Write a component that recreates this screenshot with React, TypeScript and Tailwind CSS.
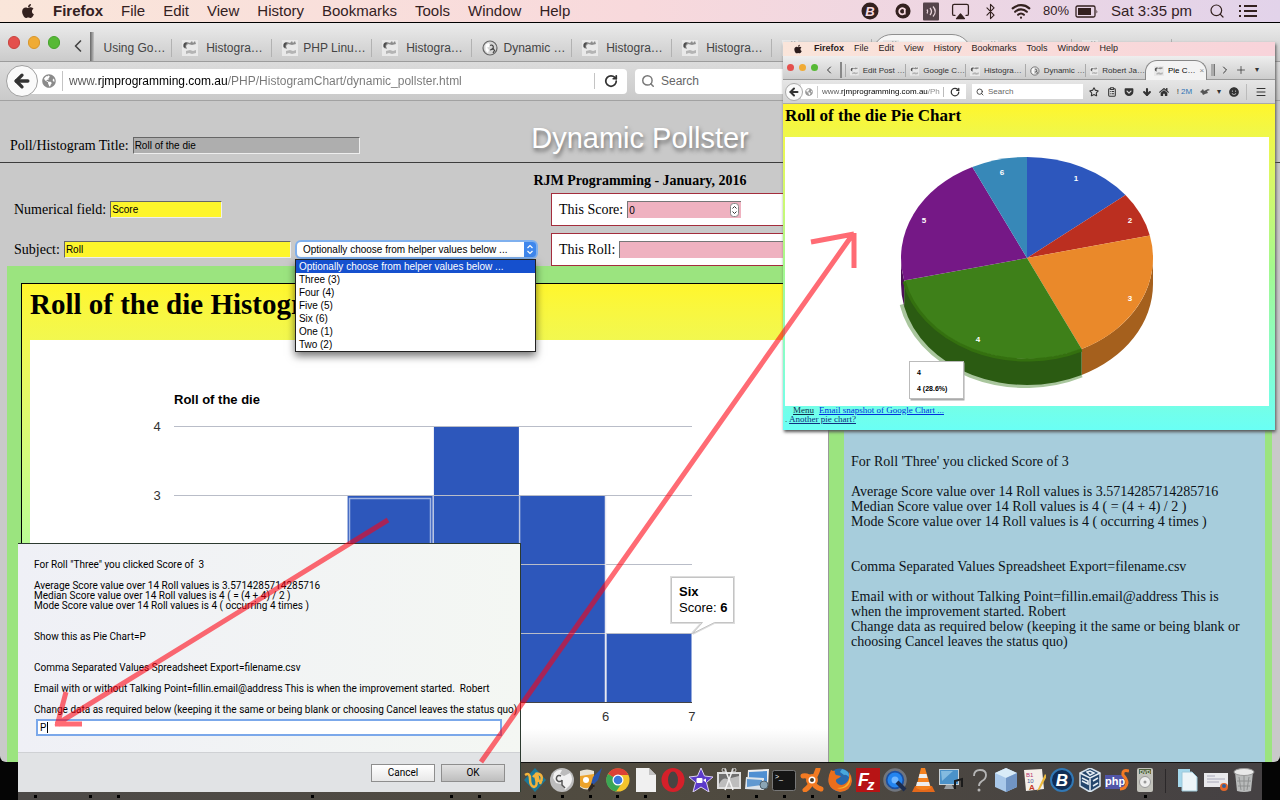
import type { ReactNode } from "react"
import {
  Airplay,
  ArrowDown,
  ArrowLeft,
  Bluetooth,
  ChevronLeft,
  ChevronRight,
  ClipboardList,
  Menu,
  Plus,
  RotateCw,
  Search,
  Star,
  Wifi,
} from "lucide-react"
import { FaApple, FaGetPocket, FaGlobeAmericas, FaHome, FaSmile } from "react-icons/fa"

const MENUS = ["File", "Edit", "View", "History", "Bookmarks", "Tools", "Window", "Help"]

const HELPERS = [
  "Optionally choose from helper values below ...",
  "Three (3)",
  "Four (4)",
  "Five (5)",
  "Six (6)",
  "One (1)",
  "Two (2)",
]

type TabInfo = { title: string; round?: boolean; active?: boolean }

const TABS: TabInfo[] = [
  { title: "Histogra…" },
  { title: "PHP Linu…" },
  { title: "Histogra…" },
  { title: "Dynamic …", round: true },
  { title: "Histogra…" },
  { title: "Histogra…" },
  { title: "" },
  { title: "", active: true },
  { title: "" },
  { title: "" },
]

const PIE_TABS: TabInfo[] = [
  { title: "Edit Post …" },
  { title: "Google C…" },
  { title: "Histogra…" },
  { title: "Dynamic …", round: true },
  { title: "Robert Ja…" },
]

const ROLL_COUNTS = [2, 1, 3, 4, 3, 1]
const PIE_COLORS = ["#2d57bd", "#bb2f20", "#ea892a", "#3e8019", "#751886", "#3788b8"]

function Favicon({ round, className }: { round?: boolean; className: string }) {
  if (round) {
    return (
      <svg viewBox="0 0 16 16" className={className}>
        <circle cx="8" cy="8" r="7" fill="#d6d6d6" stroke="#666" strokeWidth="1.2" />
        <path d="M3.5 4.500l3-1.500 1.500 2-1 2-2 .5 2 2.500-1 3-2.500-2.500z" fill="#fff" />
        <path d="M8 5.500a2 2 0 1 1 1.500 3.500M8 10l3.500-1 1 1.500-1.500 2.500" fill="none" stroke="#444" strokeWidth="1.2" />
      </svg>
    )
  }
  return (
    <svg viewBox="0 0 16 16" className={className}>
      <rect width="16" height="16" fill="#e9e9e9" />
      <path d="M1 5q1-3 4-3l3 1 2-2 1 2 2-2 1 3-4 1-4-1-2 2 1 3-3-1z" fill="#8d8d8d" />
      <path d="M2 3.500q2-1.500 3-.500L3.500 5v3L1.500 7z" fill="#4c4c4c" />
      <path d="M4 11l4-1 3 1 3-1v3l-4 1-3-1-3 1z" fill="#b4b4b4" />
    </svg>
  )
}

function BackButton({ small }: { small?: boolean }) {
  return (
    <button
      aria-label="Back"
      className={
        small
          ? "relative grid size-[18px] shrink-0 place-items-center rounded-full border border-[#a9a9a9] bg-[#fafafa]"
          : "relative grid size-8 shrink-0 place-items-center rounded-full border border-[#a0a0a0] bg-[#fafafa]"
      }
    >
      <ArrowLeft className={small ? "size-3 text-[#333]" : "size-5 text-[#333]"} strokeWidth={4} />
    </button>
  )
}

function MacMenuBar() {
  return (
    <header className="flex h-[23px] shrink-0 items-center border-b border-black bg-gradient-to-r from-[#fae6da] via-[#f8d9dc] to-[#e2d3ea] pl-5 pr-[23px] text-[15px] text-[#33211f]">
      <FaApple className="mr-[17px] size-4" />
      <nav className="flex gap-[18px] leading-5">
        <span className="font-bold">Firefox</span>
        {MENUS.map((m) => (
          <span key={m}>{m}</span>
        ))}
      </nav>
      <div className="ml-auto flex items-center">
        <svg viewBox="0 0 18 18" className="mr-4 size-[18px]">
          <circle cx="9" cy="9" r="8.500" fill="#33211f" />
          <text x="9" y="14" textAnchor="middle" fontSize="13" fontStyle="italic" fontWeight="bold" fill="#f6d9e0">B</text>
        </svg>
        <svg viewBox="0 0 18 18" className="mr-3 size-4">
          <circle cx="9" cy="9" r="8.500" fill="#33211f" />
          <path d="M11 13V6.500M11.500 8a3.500 3.500 0 1 0-.500 3.500" fill="none" stroke="#f6d9e0" strokeWidth="2" />
        </svg>
        <svg viewBox="0 0 16 18" className="mr-3 h-[19px] w-4">
          <rect width="16" height="18" rx="1" fill="#54444a" />
          <path d="M4 7q1.500 2 0 4M7 5.500q3 3.500 0 7M10 4q4.500 5 0 10" fill="none" stroke="#e7d3d9" strokeWidth="1.300" />
        </svg>
        <Airplay className="mr-3 size-[19px] [&>path:last-child]:fill-[#33211f]" strokeWidth={1.6} />
        <Bluetooth className="mr-3 size-[17px]" strokeWidth={1.6} />
        <Wifi className="mr-3 size-5" strokeWidth={2.6} />
        <span className="text-[13px]">80%</span>
        <svg viewBox="0 0 24 13" className="ml-1.5 h-[13px] w-6">
          <rect x="1" y="1" width="19" height="11" rx="1.500" fill="none" stroke="#33211f" strokeWidth="1.300" />
          <rect x="3" y="3" width="13" height="7" fill="#33211f" />
          <path d="M21.500 4.500q1.500 2 0 4z" fill="#33211f" />
        </svg>
        <span className="ml-3 mr-[17px]">Sat 3:35 pm</span>
        <Search className="mr-[14px] size-4" strokeWidth={1.8} />
        <svg viewBox="0 0 18 14" className="h-[14px] w-[18px]">
          <path d="M0 2h2M0 7h2M0 12h2M5 2h13M5 7h13M5 12h13" stroke="#33211f" strokeWidth="2" />
        </svg>
      </div>
    </header>
  )
}

function TabStrip() {
  return (
    <div className="flex h-[39px] shrink-0 overflow-hidden border-b border-[#9c9c9c] bg-gradient-to-b from-[#ebebeb] to-[#cbcbcb]">
      <div className="flex w-[90px] shrink-0 items-center gap-2 pl-2">
        <i className="h-[13px] w-3 rounded-full border border-[#c8453f] bg-[#e4504d]" />
        <i className="h-[13px] w-3 rounded-full border border-[#d9962b] bg-[#f0ab35]" />
        <i className="h-[13px] w-3 rounded-full border border-[#45a32c] bg-[#57b935]" />
        <ChevronLeft className="mt-2 size-5 text-[#444]" strokeWidth={2} />
      </div>
      <div className="mb-1 mt-4 flex w-[82px] shrink-0 items-center border-r border-[#b2b2b2] text-[12px] text-[#444]">
        <i className="-my-3 mr-1 h-8 w-1 bg-gradient-to-r from-[#666] to-[#c4c4c4]" />
        <span className="flex-1 text-center">Using Go…</span>
      </div>
      {TABS.map((t, i) =>
        t.active ? (
          <div key={i} className="mt-[11px] flex w-[100px] shrink-0 items-center rounded-t-[20px] border border-[#8f8f8f] bg-[#f6f6f6] pl-2.5">
            <Favicon className="size-4" />
          </div>
        ) : (
          <div key={i} className="mb-1 mt-4 flex w-[100px] shrink-0 items-center border-r border-[#b2b2b2] pl-2.5 text-[12px] text-[#444]">
            <Favicon round={t.round} className="size-4" />
            <span className="flex-1 text-center">{t.title}</span>
          </div>
        ),
      )}
    </div>
  )
}

function AddressBar() {
  return (
    <div className="flex h-[39px] shrink-0 items-center border-b border-[#a2a2a2] bg-gradient-to-b from-[#dcdcdc] to-[#cacaca] pl-1.5">
      <BackButton />
      <div className="-ml-2 flex h-[25px] w-[597px] shrink-0 items-center rounded-r bg-white pl-3">
        <FaGlobeAmericas className="size-3.5 text-[#8b8b8b]" />
        <i className="ml-1.5 mr-[6px] h-5 w-px bg-[#c4c4c4]" />
        <input
          aria-label="Address"
          defaultValue="www.rjmprogramming.com.au/PHP/HistogramChart/dynamic_pollster.html"
          className="min-w-0 flex-1 bg-[linear-gradient(90deg,#555_29px,#000_29px,#000_159px,#777_159px)] bg-clip-text text-[12px] text-transparent outline-none"
        />
        <i className="h-4 w-px bg-[#c4c4c4]" />
        <button aria-label="Reload" className="grid w-8 place-items-center">
          <RotateCw className="size-3.5 text-[#333]" strokeWidth={3} />
        </button>
      </div>
      <label className="ml-2 mr-2 flex h-[25px] flex-1 items-center gap-1.5 rounded bg-white pl-1.5">
        <Search className="size-3.5 text-[#777]" strokeWidth={2.5} />
        <input aria-label="Search" placeholder="Search" className="min-w-0 flex-1 text-[12px] outline-none placeholder:text-[#666]" />
      </label>
    </div>
  )
}

function PollForm() {
  return (
    <div className="font-['Liberation_Serif',serif] text-[14px] text-black">
      <div className="grid h-[62px] grid-cols-[1fr_auto_1fr] border-b border-[#3c3c3c]">
        <div className="flex items-center gap-1 self-end pb-1.5 pl-2.5">
          <label htmlFor="title">Poll/Histogram Title:</label>
          <input
            id="title"
            defaultValue="Roll of the die"
            className="h-[17px] w-[227px] border border-b-[#eee] border-l-[#666] border-r-[#eee] border-t-[#666] bg-[#aeaeae] pl-px font-['Liberation_Sans',sans-serif] text-[10px]"
          />
        </div>
        <h1 className="self-end pb-[6px] font-['Liberation_Sans',sans-serif] text-[29px] leading-9 text-white [text-shadow:1px_3px_4px_#666]">
          Dynamic Pollster
        </h1>
      </div>
      <p className="flex h-[30px] items-center justify-center pt-1 font-bold">RJM Programming - January, 2016</p>
      <div className="grid grid-cols-[551fr_721fr] gap-y-[7px] pr-2">
        <div className="flex h-[33px] items-center gap-1 pl-3.5">
          <label htmlFor="num">Numerical field:</label>
          <input
            id="num"
            defaultValue="Score"
            className="h-[17px] w-28 border border-b-[#eee] border-l-[#666] border-r-[#eee] border-t-[#666] bg-[#fdf52b] pl-px font-['Liberation_Sans',sans-serif] text-[10px]"
          />
        </div>
        <div className="flex h-[33px] items-center gap-1 border border-[#a42d3c] bg-white pl-[7px]">
          <label htmlFor="score">This Score:</label>
          <div className="relative flex">
            <input
              id="score"
              defaultValue="0"
              className="h-[17px] w-[114px] border-l border-t border-[#777] bg-[#efb2c0] pl-px font-['Liberation_Sans',sans-serif] text-[10px]"
            />
            <svg viewBox="0 0 9 14" className="absolute right-0.5 top-0.5 h-[14px] w-[9px]">
              <rect x=".5" y=".5" width="8" height="13" rx="3" fill="#fff" stroke="#888" />
              <path d="M2.500 5.500l2-2 2 2M2.500 8.500l2 2 2-2" fill="none" stroke="#333" />
            </svg>
          </div>
        </div>
        <div className="flex h-[33px] items-center gap-1 pl-3.5">
          <label htmlFor="subject">Subject:</label>
          <input
            id="subject"
            defaultValue="Roll"
            className="h-[17px] w-[227px] border border-b-[#eee] border-l-[#666] border-r-[#eee] border-t-[#666] bg-[#fdf52b] pl-px font-['Liberation_Sans',sans-serif] text-[10px]"
          />
          <HelperSelect />
        </div>
        <div className="flex h-[33px] items-center gap-1 border border-[#a42d3c] bg-white pl-[7px]">
          <label htmlFor="roll">This Roll:</label>
          <input id="roll" className="h-[17px] w-[227px] border-l border-t border-[#777] bg-[#efb2c0]" />
        </div>
      </div>
    </div>
  )
}

function HelperSelect() {
  return (
    <div className="relative z-10 flex font-['Liberation_Sans',sans-serif] text-[10px]">
      <select
        aria-label="Helper values"
        className="ml-0.5 h-[15px] w-[239px] appearance-none rounded-[4px] bg-white pl-1.5 leading-[15px] shadow-[0_0_0_2px_#7fb0ee]"
      >
        {HELPERS.map((h) => (
          <option key={h}>{h}</option>
        ))}
      </select>
      <svg viewBox="0 0 12 15" className="pointer-events-none absolute right-0 top-0 h-[15px] w-3">
        <path d="M0 0h9a3 3 0 0 1 3 3v9a3 3 0 0 1-3 3H0z" fill="#3f87ec" />
        <path d="M3.500 6L6 3.500 8.500 6M3.500 9L6 11.500 8.500 9" fill="none" stroke="#fff" strokeWidth="1.200" />
      </svg>
      <ul className="absolute left-0 top-[17px] w-[241px] border border-[#222] bg-white leading-[13px] shadow-[0_4px_8px_rgba(0,0,0,0.55)]">
        {HELPERS.map((h, i) => (
          <li key={h} className={i === 0 ? "bg-[#1550ce] pl-[3px] text-white" : "pl-[3px]"}>
            {h}
          </li>
        ))}
      </ul>
    </div>
  )
}

function Histogram() {
  const base = 362
  const step = 69
  const barX = (i: number) => 144 + i * 86.3
  return (
    <svg viewBox="0 0 798 422" className="block h-[422px] w-[798px] font-['Liberation_Sans',sans-serif]">
      <defs>
        <linearGradient id="floor" x1="0" x2="0" y1="0" y2="1">
          <stop offset=".92" stopColor="#fff" />
          <stop offset="1" stopColor="#e4e4e4" />
        </linearGradient>
      </defs>
      <rect width="798" height="422" fill="url(#floor)" />
      <text x="144" y="64" fontSize="13" fontWeight="bold">Roll of the die</text>
      {ROLL_COUNTS.map((n, i) => (
        <rect key={i} x={barX(i) + 1} y={base - n * step} width={85} height={n * step} fill="#2d57bb" />
      ))}
      {[1, 2, 3, 4].map((n) => (
        <path key={n} d={`M144 ${base - n * step + 0.5}H662`} stroke="#b9bdc8" />
      ))}
      {[3, 4].map((n) => (
        <text key={n} x="127" y={base - n * step + 5} textAnchor="middle" fontSize="13" fill="#333">{n}</text>
      ))}
      <rect x="319.500" y="158.500" width="81" height="203" fill="none" stroke="#9fb4e4" strokeWidth="1.500" />
      <path d="M403.500 156v206M489.500 156v206" stroke="#b9c4e0" />
      <path d="M575.500 156v206" stroke="#e8e8f0" strokeWidth="1.500" />
      <path d={`M144 ${base}.500H662`} stroke="#444" />
      {[6, 7].map((n) => (
        <text key={n} x={barX(n - 1)} y="381" textAnchor="middle" fontSize="13" fill="#333">{n}</text>
      ))}
      <path d="M641.500 237.500h62v45h-19l-22 11 10-11h-31z" fill="none" stroke="#ddd" strokeWidth="3" />
      <path d="M641.500 237.500h62v45h-19l-22 11 10-11h-31z" fill="#fff" stroke="#c4c4c4" />
      <text x="649" y="256" fontSize="13" fontWeight="bold">Six</text>
      <text x="649" y="272" fontSize="13">
        Score: <tspan fontWeight="bold">6</tspan>
      </text>
    </svg>
  )
}

function Results() {
  return (
    <section className="bg-[#a7cddc] px-[7px] pt-[188px] font-['Liberation_Serif',serif] text-[14px] leading-[15px] text-[#0c1218]">
      <p>For Roll 'Three' you clicked Score of 3</p>
      <p className="mt-[15px]">
        Average Score value over 14 Roll values is 3.5714285714285716
        <br />
        Median Score value over 14 Roll values is 4 ( = (4 + 4) / 2 )
        <br />
        Mode Score value over 14 Roll values is 4 ( occurring 4 times )
      </p>
      <p className="mt-[30px]">Comma Separated Values Spreadsheet Export=filename.csv</p>
      <p className="mt-[15px]">
        Email with or without Talking Point=fillin.email@address This is
        <br />
        when the improvement started. Robert
        <br />
        Change data as required below (keeping it the same or being blank or
        <br />
        choosing Cancel leaves the status quo)
      </p>
    </section>
  )
}

function PromptDialog() {
  return (
    <form
      role="dialog"
      className="absolute left-[18px] top-[543px] z-20 flex h-[249px] w-[503px] flex-col border-r border-t border-[#2c3a30] bg-gradient-to-r from-[#eff0f6] to-[#f4f7f3] font-[Roboto,sans-serif] text-[10px] leading-[10px] text-black"
    >
      <div className="flex-1 px-4 pt-4">
        <p>For Roll "Three" you clicked Score of&nbsp; 3</p>
        <p className="mt-[11px]">
          Average Score value over 14 Roll values is 3.5714285714285716
          <br />
          Median Score value over 14 Roll values is 4 ( = (4 + 4) / 2 )
          <br />
          Mode Score value over 14 Roll values is 4 ( occurring 4 times )
        </p>
        <p className="mt-[21px]">Show this as Pie Chart=P</p>
        <p className="mt-[21px]">Comma Separated Values Spreadsheet Export=filename.csv</p>
        <p className="mt-[11px]">Email with or without Talking Point=fillin.email@address This is when the improvement started.&nbsp; Robert</p>
        <label htmlFor="answer" className="mt-[11px] block whitespace-nowrap">
          Change data as required below (keeping it the same or being blank or choosing Cancel leaves the status quo)
        </label>
        <div className="relative ml-0.5 mt-1 flex">
          <input id="answer" defaultValue="P" className="h-[17px] w-[466px] border-2 border-[#7ba8ea] bg-white pl-0.5 outline-none" />
          <i className="absolute left-[11px] top-[3px] h-[11px] w-px bg-black" />
        </div>
      </div>
      <div className="flex h-10 items-center justify-end gap-1.5 border-t border-[#cfd1d4] bg-[#e1e3e5] pr-[15px]">
        <button type="button" className="h-[18px] w-16 border border-[#8e8e8e] bg-gradient-to-b from-white to-[#e8e8e8]">Cancel</button>
        <button type="button" className="h-[18px] w-16 border border-[#8e8e8e] bg-gradient-to-b from-[#e2e2e2] to-[#bebebe]">OK</button>
      </div>
    </form>
  )
}

function PieChart() {
  const cx = 242
  const cy = 121
  const rx = 126
  const ry = 101
  const depth = 26
  const total = 14
  // slice shares for faces 1 to 6
  const shares = [2, 1, 3, 4, 3, 1]
  const at = (n: number) => {
    const a = (n / total) * Math.PI * 2
    return [cx + rx * Math.sin(a), cy - ry * Math.cos(a)]
  }
  let seen = 0
  const slices = shares.map((n, i) => {
    const [x1, y1] = at(seen)
    seen += n
    const [x2, y2] = at(seen)
    return <path key={i} d={`M${cx} ${cy}L${x1} ${y1}A${rx} ${ry} 0 0 1 ${x2} ${y2}Z`} fill={PIE_COLORS[i]} />
  })
  const [gx, gy] = at(6)
  const [px, py] = at(10)
  return (
    <svg viewBox="0 0 484 269" className="block h-[269px] w-[484px] bg-white font-['Liberation_Sans',sans-serif]">
      <path d={`M${px - 2} ${py + depth - 2}A${rx} ${ry} 0 0 0 ${gx} ${gy + depth}`} fill="none" stroke="#a9c69d" strokeWidth="5" />
      <path d={`M${cx + rx} ${cy}v${depth}A${rx} ${ry} 0 0 1 ${gx} ${gy + depth}v${-depth}A${rx} ${ry} 0 0 0 ${cx + rx} ${cy}`} fill="#a5601d" />
      <path d={`M${gx} ${gy}v${depth}A${rx} ${ry} 0 0 1 ${px} ${py + depth}v${-depth}A${rx} ${ry} 0 0 0 ${gx} ${gy}`} fill="#2b5b12" />
      <path d={`M${px} ${py}v${depth}A${rx} ${ry} 0 0 1 ${cx - rx} ${cy + depth}v${-depth}A${rx} ${ry} 0 0 0 ${px} ${py}`} fill="#4d1058" />
      {slices}
      <path d={`M${gx} ${gy + 1}A${rx} ${ry} 0 0 1 ${px} ${py + 1}`} fill="none" stroke="#34700f" strokeWidth="3" />
      <g fontSize="8" fontWeight="bold" fill="#fff" textAnchor="middle">
        <text x="291" y="44">1</text>
        <text x="345" y="86">2</text>
        <text x="345" y="164">3</text>
        <text x="193" y="205">4</text>
        <text x="139" y="86">5</text>
        <text x="217" y="38">6</text>
      </g>
      <rect x="125.500" y="225.500" width="54" height="38" fill="#aaa" />
      <rect x="124.500" y="224.500" width="54" height="37" fill="#fff" stroke="#bbb" />
      <g fontSize="7" fontWeight="bold">
        <text x="132" y="238">4</text>
        <text x="132" y="254">4 (28.6%)</text>
      </g>
    </svg>
  )
}

function PieWindow() {
  return (
    <section className="absolute left-[783px] top-[42px] z-20 h-[388px] w-[492px] overflow-hidden bg-[#e9e9e9] text-[8px] text-[#333] shadow-[1px_2px_3px_#555]">
      <div className="flex h-[14px] items-center bg-gradient-to-r from-[#fae5da] to-[#f8d3da] pl-2.5 text-[9px] text-[#2b1b1b]">
        <FaApple className="mr-[11px] size-2.5" />
        <nav className="flex gap-2.5">
          <span className="font-bold">Firefox</span>
          {MENUS.map((m) => (
            <span key={m}>{m}</span>
          ))}
        </nav>
      </div>
      <div className="flex h-6 border-b border-[#999] bg-gradient-to-b from-[#eee] to-[#cdcdcd]">
        <div className="flex w-[62px] items-center gap-[5px] pl-1">
          <i className="size-[7px] rounded-full bg-[#e4504d]" />
          <i className="size-[7px] rounded-full bg-[#f0ab35]" />
          <i className="size-[7px] rounded-full bg-[#57b935]" />
          <ChevronLeft className="mt-1 size-3" />
          <i className="mt-1 h-4 w-0.5 bg-[#888]" />
        </div>
        {PIE_TABS.map((t) => (
          <div key={t.title} className="mb-0.5 mt-2 flex w-[60px] items-center gap-1 border-l border-[#aaa] pl-1">
            <Favicon round={t.round} className="size-2.5" />
            <span className="whitespace-nowrap">{t.title}</span>
          </div>
        ))}
        <div className="-mb-px mt-1 flex w-[62px] shrink-0 items-center gap-1 whitespace-nowrap rounded-t-[12px] border border-b-0 border-[#888] bg-[#f3f3f3] pl-2 text-black">
          <Favicon className="size-2.5 shrink-0" />
          <span>Pie C…</span>
          <span className="text-[#888]">×</span>
        </div>
        <div className="flex flex-1 items-center pt-1">
          <i className="mx-1 h-3 w-1 border-r border-[#777] bg-[#aaa]" />
          <ChevronRight className="size-3" />
          <Plus className="ml-1 size-3" strokeWidth={1.5} />
          <span className="ml-2">▾</span>
        </div>
      </div>
      <div className="flex h-6 items-center border-b border-[#aaa] bg-gradient-to-b from-[#e6e6e6] to-[#d2d2d2] pl-0.5 pr-2">
        <BackButton small />
        <div className="-ml-0.5 flex h-[15px] w-[165px] items-center bg-white pl-1">
          <FaGlobeAmericas className="size-2 text-[#999]" />
          <i className="mx-1 h-3 w-px bg-[#ccc]" />
          <input
            aria-label="Address"
            defaultValue="www.rjmprogramming.com.au/Ph"
            className="min-w-0 flex-1 bg-[linear-gradient(90deg,#555_19px,#000_19px,#000_106px,#888_106px)] bg-clip-text text-transparent outline-none"
          />
          <i className="h-2.5 w-px bg-[#bbb]" />
          <RotateCw className="mx-1.5 size-2.5" strokeWidth={3} />
        </div>
        <label className="ml-1.5 flex h-[15px] w-[111px] items-center gap-1 bg-white pl-1">
          <Search className="size-2" strokeWidth={2.5} />
          <input aria-label="Search" placeholder="Search" className="min-w-0 flex-1 outline-none placeholder:text-[#666]" />
        </label>
        <div className="flex flex-1 items-center justify-between pl-1.5">
          <Star className="size-2.5" strokeWidth={2.5} />
          <ClipboardList className="size-2.5" strokeWidth={2.5} />
          <FaGetPocket className="size-2.5" />
          <ArrowDown className="size-2.5" strokeWidth={5} />
          <FaHome className="size-2.5" />
          <span>
            ! <span className="text-[#2f74b5]">2M</span>
          </span>
          <svg viewBox="0 0 10 10" className="size-2.5">
            <path d="M0 5l3-3 1 2 4-2 2 1-3 1 1 2-3 1-2 1-1-2z" fill="#555" />
          </svg>
          <span>▾</span>
          <FaSmile className="size-2.5" />
          <i className="h-4 w-px bg-[#bbb]" />
          <Menu className="size-3" />
        </div>
      </div>
      <div className="h-[326px] bg-gradient-to-b from-[#fff629] via-[#a4f98d] to-[#6afff5] pl-0.5 font-['Liberation_Serif',serif] text-[9px] leading-[9px]">
        <h2 className="h-[33px] pt-0.5 text-[17px] font-bold leading-5 text-black">Roll of the die Pie Chart</h2>
        <PieChart />
        <p className="pl-2">
          <a href="#menu" className="text-[#103050] underline">Menu</a>
          <a href="#email" className="ml-[5px] text-[#0030e0] underline">Email snapshot of Google Chart ...</a>
        </p>
        <p>
          . <a href="#another" className="text-[#103080] underline">Another pie chart?</a>
        </p>
      </div>
    </section>
  )
}

function Arrows() {
  return (
    <svg viewBox="0 0 1280 800" className="pointer-events-none absolute left-0 top-0 z-30 h-[800px] w-[1280px]" fill="none" stroke="#ff0010" strokeOpacity=".58" strokeWidth="5">
      <path d="M388 520L57 724M66 692L57 726M55 724h27" />
      <path d="M481 762L853 234M811 242l43-8M854 233v35" />
    </svg>
  )
}

const DOCK_ICONS: ReactNode[] = [
  <>
    <path d="M12 0l11 12-11 12L1 12z" fill="#1b7898" />
    <path d="M2 7q5-3 5 4t4 8q4-1 2-8t3-5q5 2 1 10M10 9q4-5 5 1t4 2" fill="none" stroke="#f3b33c" strokeWidth="2.500" />
  </>,
  <>
    <circle cx="12" cy="12" r="12" fill="#bcbcbc" />
    <path d="M4 5q4-4 8-3l-2 4 4 2 6-3q4 6 0 12l-5 5-4-6-5-1-3-5z" fill="#f1f1f1" />
    <path d="M11 8a3 3 0 1 0 1 4M12 12v5l3 3" fill="none" stroke="#555" strokeWidth="1.500" />
  </>,
  <>
    <path d="M2 3q7-3 14 0v16q-7 5-14 0z" fill="#e8e2d4" />
    <path d="M2 8l14-2v11q-7 6-14 1z" fill="#eda32b" />
    <circle cx="8" cy="12" r="3" fill="#fff" />
    <path d="M24 0l-4 12-8 8 3-11z" fill="#2854ad" />
    <path d="M14 15l3 3-6 6-1-3z" fill="#2c2521" />
  </>,
  <>
    <circle cx="12" cy="12" r="11.500" fill="#f3c42c" />
    <path d="M12 12L2 6a11.500 11.500 0 0 1 20.500 1H12z" fill="#dc4236" />
    <path d="M12 12L2 6a11.500 11.500 0 0 0 8 17.500l5-7z" fill="#3ba655" />
    <circle cx="12" cy="12" r="5.500" fill="#fff" />
    <circle cx="12" cy="12" r="4.300" fill="#3c78dc" />
  </>,
  <>
    <path d="M2 0h13l7 7v17H2z" fill="#f0f0f0" />
    <path d="M15 0l7 7h-7z" fill="#c3c3c3" />
  </>,
  <>
    <ellipse cx="12" cy="12" rx="11.500" ry="12" fill="#d5202a" />
    <ellipse cx="12" cy="12" rx="5" ry="8.500" fill="#484442" />
  </>,
  <>
    <path d="M12 0l3.500 8 8.500 1-6.500 5.500L20 24l-8-5-8 5 2.500-9.500L0 9l8.500-1z" fill="#5b3aca" stroke="#dcd2f5" />
    <rect x="7.500" y="10" width="6" height="5" rx="1" fill="#fff" />
    <path d="M14 12l3-1.500v4z" fill="#fff" />
  </>,
  <>
    <path d="M0 4h24v17H0z" fill="#dedede" />
    <path d="M2 6h20v13H2z" fill="#6f6f6f" />
    <path d="M2 16q4-7 8-5l12-3v11H2z" fill="#bdbdbd" />
    <path d="M8 1l8 21M16 1L8 22" stroke="#f2f2f2" strokeWidth="1.500" />
    <circle cx="7" cy="2" r="2" fill="none" stroke="#ccc" />
    <circle cx="17" cy="2" r="2" fill="none" stroke="#ccc" />
  </>,
  <>
    <path d="M3 2l21-1-1 17-21 2z" fill="#eee" />
    <path d="M4 4l18-1v12l-18 2z" fill="#4f8fd2" />
    <path d="M1 9l18 1v12l-19-1z" fill="#dde4ea" />
    <path d="M2 11l15 1v5l-15 2z" fill="#6199d0" />
    <circle cx="19" cy="17" r="4" fill="#8ba5b5" stroke="#50616c" />
  </>,
  <>
    <rect x=".5" y="2.500" width="23" height="20" rx="2" fill="#151515" stroke="#777" />
    <text x="3" y="11" fontSize="7" fill="#fff">&gt;_</text>
  </>,
  <>
    <path d="M3 8q5-1 9 4 4-4 6-11M12 12q2 7 9 9M12 12q-1 6-7 10" fill="none" stroke="#f27a22" strokeWidth="5" strokeLinecap="round" />
    <circle cx="12" cy="12" r="6" fill="#f27a22" />
    <circle cx="12" cy="12" r="3.500" fill="#fff" />
    <circle cx="12" cy="12" r="2" fill="#473c2c" />
  </>,
  <>
    <circle cx="12" cy="12" r="11.500" fill="#2868ac" />
    <path d="M14 1q8 2 7 8-3-3-5-2l-4-3z" fill="#49a8dc" />
    <path d="M3 2Q-1 10 1 16t11 8q11-1 12-11 0-5-3-9 1 8-3 11-5 4-9 0-3-4 2-5l2-2-5-1q-2-2-1-4Q4 3 3 2z" fill="#eb6e1c" />
    <path d="M22 7q2 8-4 12-5 3-9 1 12 0 13-13z" fill="#f7b52c" />
  </>,
  <>
    <rect width="24" height="24" fill="#b71415" />
    <text x="2" y="18" fontSize="18" fontStyle="italic" fontWeight="bold" fill="#fff">F</text>
    <text x="11" y="22" fontSize="15" fontStyle="italic" fontWeight="bold" fill="#fff">z</text>
  </>,
  <>
    <circle cx="12" cy="12" r="10.500" fill="#1d4f9e" stroke="#71767f" strokeWidth="2.500" />
    <circle cx="12" cy="12" r="5.500" fill="#6fb6ff" stroke="#2384ef" strokeWidth="4" />
    <path d="M14 14l8 8" stroke="#1c2c4e" strokeWidth="4" />
  </>,
  <>
    <path d="M4 18h17l3 6H1z" fill="#e5691b" />
    <path d="M10 0h4l6 20q-8 4-15 0z" fill="#f58220" />
    <path d="M8.500 6h7l1 4h-9zM6 14h12l1 4H5z" fill="#eee" />
  </>,
  <>
    <rect x="0" y="1" width="20" height="16" fill="#c9d1d6" />
    <rect x="1" y="2" width="18" height="14" fill="#4b92c9" />
    <path d="M2 3h12L3 13z" fill="#83bbe0" />
    <path d="M7 17h6l2 4H5z" fill="#9aa0a4" />
    <path d="M16 21v-8l7-2v8" fill="none" stroke="#1b1b1b" strokeWidth="2" />
  </>,
  <>
    <path d="M7 8q0-6 6-6t6 5q0 4-4 6-3 2-3 5" fill="none" stroke="#b5b5b5" strokeWidth="1.800" />
    <circle cx="12" cy="22" r="1.500" fill="#b5b5b5" />
  </>,
  <>
    <path d="M12 0l11 5v14l-11 5-11-5V5z" fill="#a9c8e9" />
    <path d="M1 5l11 5 11-5L12 0z" fill="#d9ebf7" />
    <path d="M12 10l11-5v14l-11 5z" fill="#7195c4" />
  </>,
  <>
    <path d="M2 2l18-1 2 20-18 2z" fill="#f5f0ea" />
    <text x="4" y="9" fontSize="6" fill="#b43472">B1</text>
    <text x="5" y="15" fontSize="6" fill="#4760a0">10</text>
    <text x="7" y="22" fontSize="8" fontWeight="bold" fill="#c63a25">A</text>
    <path d="M23 6l-7 15-1 2 3-2 7-13z" fill="#ecb93d" />
  </>,
  <>
    <circle cx="12" cy="12" r="11" fill="#102c55" stroke="#3178b5" strokeWidth="2" />
    <text x="12" y="18" textAnchor="middle" fontSize="17" fontStyle="italic" fontWeight="bold" fill="#fff">B</text>
  </>,
  <>
    <path d="M12 0l10 5v13l-10 6-10-6V5z" fill="#24466c" stroke="#d3e0eb" strokeWidth="1.500" />
    <path d="M2 5l10 5 10-5M12 10v14M4 10l6 3v3l-6-3M15 13l5-3M15 18l5-3M9 4l3-1 4 2-4 2z" fill="none" stroke="#e6eef4" strokeWidth="1.500" />
  </>,
  <>
    <rect x="0" y="7" width="19" height="14" fill="#5155a8" />
    <text x="0" y="17" fontSize="11" fontWeight="bold" fill="#fff">php</text>
    <path d="M24 3q-7-2-6 4 4 4 4 8-1 6-7 6" fill="none" stroke="#f27a25" strokeWidth="3" />
  </>,
  <>
    <rect x="4" y="0" width="16" height="24" rx="2" fill="#c2c2bb" />
    <rect x="6" y="1" width="12" height="5" fill="#4e603b" />
    <text x="12" y="5.500" textAnchor="middle" fontSize="5" fill="#fff">DVD</text>
    <circle cx="12" cy="14" r="5.500" fill="#eee" stroke="#999" />
    <circle cx="12" cy="14" r="1.500" fill="#999" />
  </>,
]

const DOCK_HIDDEN = 18
const DOCK_RUNNING = [0, 2, 3, 10, 15, 16, 18, 19, 20, 21, 22, 25, 26, 27, 28, 29, 40]

function Dock() {
  const items: ReactNode[] = [...Array(DOCK_HIDDEN).fill(null), ...DOCK_ICONS]
  return (
    <footer className="flex h-[38px] shrink-0 bg-[#050505]">
      <div className="ml-[18px] mr-[18px] flex min-w-0 flex-1 border-t border-[#111] bg-gradient-to-r from-[#4d4a48] via-[#504b3f] via-50% to-[#454143] pl-[5px] pr-1.5">
        <div className="flex flex-1 justify-between">
          {items.map((icon, i) => (
            <div key={i} className="flex w-6 flex-col items-center pt-[5px]">
              <svg viewBox="0 0 24 24" className="size-6">
                {icon}
              </svg>
              {DOCK_RUNNING.includes(i) && <i className="mt-[3px] size-[3px] bg-black" />}
            </div>
          ))}
        </div>
        <i className="ml-2 mr-2.5 mt-1.5 h-6 w-px bg-[#2b2829]" />
        <div className="flex gap-1 pt-[5px]">
          <svg viewBox="0 0 24 24" className="size-6">
            <path d="M2 1h12v18H2z" fill="#a5d8ec" />
            <path d="M6 4h10l5 5v14H6z" fill="#edf5f8" stroke="#9dc9da" />
          </svg>
          <svg viewBox="0 0 24 24" className="size-6">
            <path d="M0 5h24v14H0z" fill="#e9e9ec" />
            <path d="M3 8h8M3 11h18M3 14h12" stroke="#aab" />
            <circle cx="20" cy="19" r="4" fill="#e2672b" />
            <circle cx="20" cy="18" r="2" fill="#30609e" />
          </svg>
          <svg viewBox="0 0 24 24" className="size-6">
            <path d="M3 4h18l-2 19q-7 2-14 0z" fill="#b9bbbb" />
            <ellipse cx="12" cy="4" rx="10" ry="3.500" fill="#e9e9e9" stroke="#999" />
            <path d="M7 9l2 13M12 8v15M17 9l-2 13M5 13h14M6 18h12" stroke="#8e9090" />
          </svg>
        </div>
      </div>
    </footer>
  )
}

export default function App() {
  return (
    <div className="relative flex h-screen flex-col overflow-hidden bg-black font-['Liberation_Sans',sans-serif]">
      <MacMenuBar />
      <main className="flex min-h-0 flex-1 flex-col overflow-hidden rounded-b-md bg-[#c9c9c9]">
        <TabStrip />
        <AddressBar />
        <PollForm />
        <div className="ml-[7px] mr-2 grid flex-1 grid-cols-[808fr_421fr] gap-[15px] bg-[#9be47f] pl-3.5 pr-[7px]">
          <section className="mt-[17px] flex flex-col overflow-hidden border-l border-r border-t border-l-black border-r-[#999] border-t-black bg-gradient-to-b from-[#fff62b] to-[#66ffc8] pl-2">
            <h2 className="h-[56px] font-['Liberation_Serif',serif] text-[29px] font-bold leading-10 text-black">
              Roll of the die Histogram Chart
            </h2>
            <Histogram />
          </section>
          <Results />
        </div>
      </main>
      <Dock />
      <PromptDialog />
      <PieWindow />
      <Arrows />
    </div>
  )
}
